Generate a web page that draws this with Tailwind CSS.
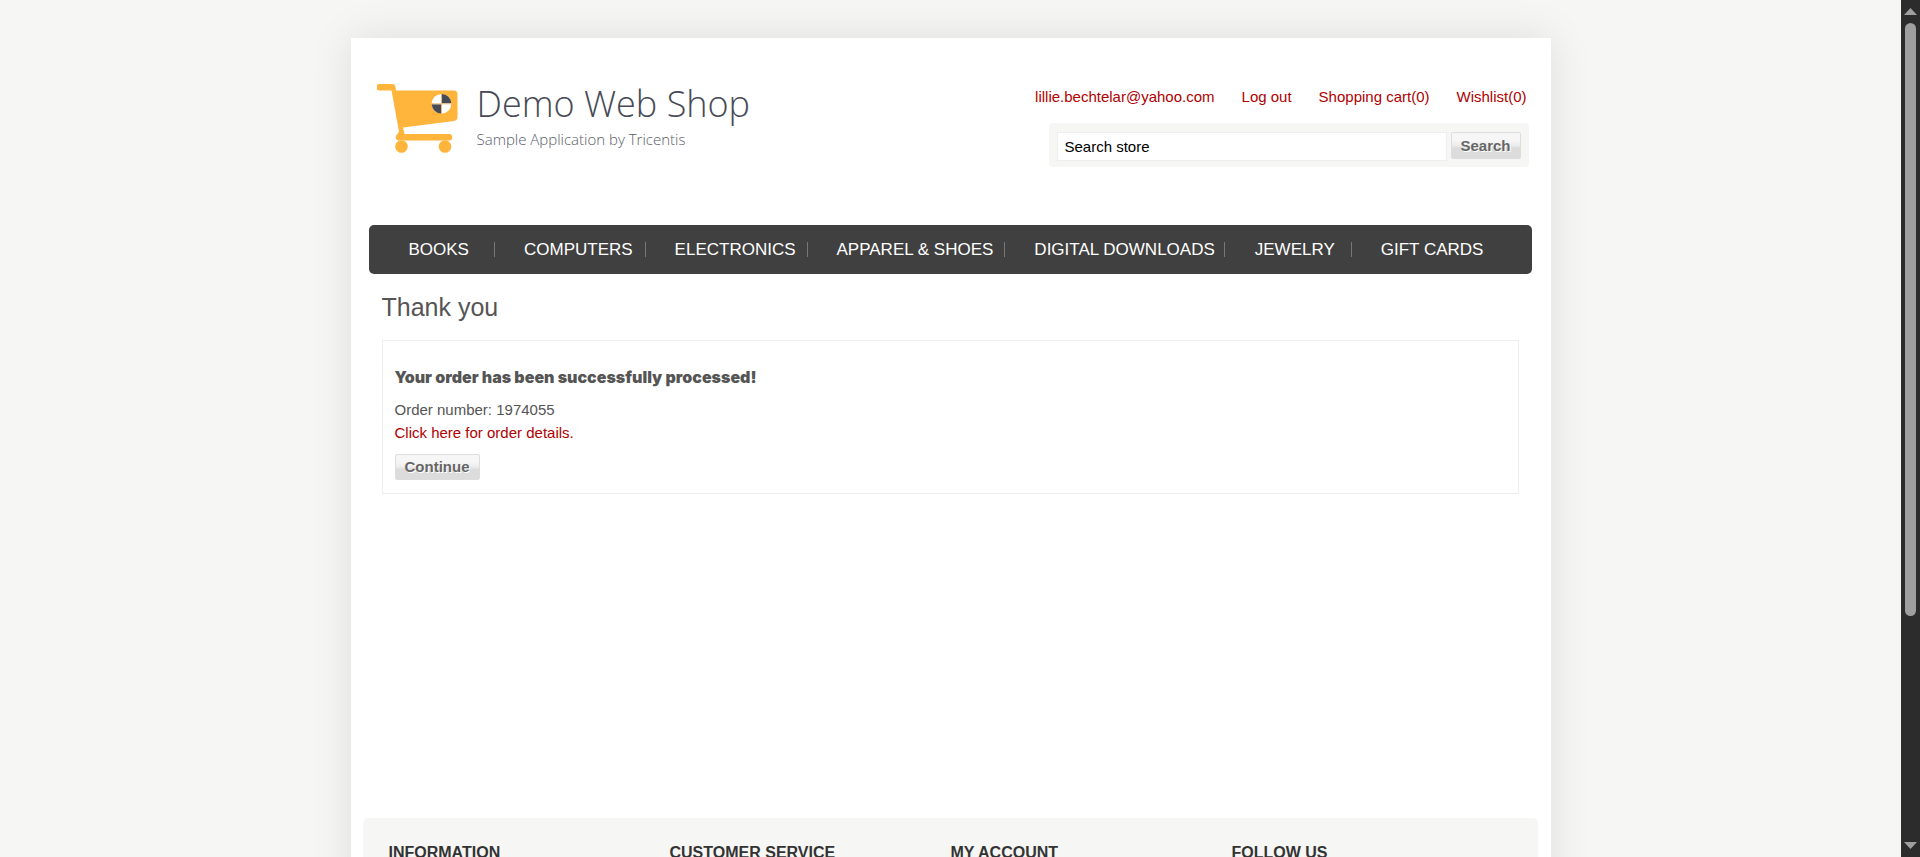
<!DOCTYPE html>
<html lang="en">
<head>
<meta charset="utf-8">
<meta name="viewport" content="width=device-width, initial-scale=1">
<title>Demo Web Shop. Checkout</title>
<script src="https://cdn.jsdelivr.net/npm/@tailwindcss/browser@4"></script>
</head>
<body class="flex h-screen overflow-hidden bg-[#f6f6f4] font-['Liberation_Sans',Arial,sans-serif] text-[15px] leading-[23px] text-[#555]">
  <div class="h-full min-w-0 flex-1 overflow-hidden pt-[38px]">
    <div class="mx-auto w-full max-w-[1200px] bg-white pt-11 pr-[13px] pl-3 shadow-[0_0_40px_rgba(0,0,0,0.1)]">

      <header class="flex h-[143px] items-start justify-between pr-[9px] pl-[14px]">
        <a href="#" class="flex items-start gap-[19px]" aria-label="Demo Web Shop home">
          <svg class="mt-px h-[72px] w-[81px]" viewBox="0 0 81 72" aria-hidden="true">
            <g fill="#ffb43b">
              <path d="M2.500 1H15q3 0 3.500 3L19 7.500H77q3.500 0 3.500 3.500V34q0 3.500-3.500 4L26 44.500 27.500 51H72a3 3 0 0 1 0 6.500H21a3.500 3.500 0 0 1-1-6l2-3L14.500 7.500H2.500a3.250 3.250 0 0 1 0-6.500Z"/>
              <circle cx="24.500" cy="63.500" r="6.300"/>
              <circle cx="68" cy="63.500" r="6.300"/>
            </g>
            <circle cx="64.500" cy="20.800" r="9.800" fill="#fff"/>
            <path fill="#474b57" d="M65 20.300V11a9.800 9.800 0 0 1 9.300 9.300ZM64 21.300V30.600a9.800 9.800 0 0 1-9.300-9.300Z"/>
            <path stroke="#e5b77a" stroke-width="1" d="M64.500 11V30.600M54.700 20.800H74.300"/>
          </svg>
          <span class="flex flex-col font-['Open_Sans',sans-serif] font-light">
            <span class="text-[36px] leading-[44px] text-[#474a56]">Demo Web Shop</span>
            <span class="text-[15px] leading-[26px] text-[#5a5d68]">Sample Application by Tricentis</span>
          </span>
        </a>

        <div class="flex flex-col items-end pt-[3px]">
          <nav aria-label="Account" class="flex gap-[27px] pr-[2px] text-[#b00000]">
            <a href="#">lillie.bechtelar@yahoo.com</a>
            <a href="#">Log out</a>
            <a href="#">Shopping cart(0)</a>
            <a href="#">Wishlist(0)</a>
          </nav>
          <form class="mt-[15px] flex w-[480px] items-start gap-1 rounded bg-[#f6f6f4] px-2 pt-[9px] pb-[6px]">
            <input type="text" value="Search store" aria-label="Search store" class="h-[29px] min-w-0 flex-1 border border-[#eee] bg-white px-[7px] text-[15px] text-black">
            <button type="button" class="h-[27px] w-[70px] rounded-xs border border-[#ddd] bg-linear-to-b from-[#f6f6f6] from-30% via-[#ececec] via-50% to-[#dcdcdc] to-60% text-[15px] leading-6 font-bold text-[#666] text-shadow-[1px_1px_0_#fff]">Search</button>
          </form>
        </div>
      </header>

      <nav aria-label="Categories" class="mx-[6px] rounded-[5px] bg-[#404040] pt-[17px] pb-[17px] pl-10 text-[17px] leading-[15px] text-white">
        <ul class="flex">
          <li class="border-r border-[#777] pr-[25px]"><a href="#">BOOKS</a></li>
          <li class="border-r border-[#777] pr-3 pl-[29px]"><a href="#">COMPUTERS</a></li>
          <li class="border-r border-[#777] pr-[11px] pl-[29px]"><a href="#">ELECTRONICS</a></li>
          <li class="border-r border-[#777] pr-[11px] pl-[29px]"><a href="#">APPAREL &amp; SHOES</a></li>
          <li class="border-r border-[#777] pr-[9px] pl-[29px]"><a href="#">DIGITAL DOWNLOADS</a></li>
          <li class="border-r border-[#777] pr-4 pl-[30px]"><a href="#">JEWELRY</a></li>
          <li class="pl-[29px]"><a href="#">GIFT CARDS</a></li>
        </ul>
      </nav>

      <main class="min-h-[544px] px-[19px] pt-[17px]">
        <h1 class="text-[25px] leading-8">Thank you</h1>
        <section class="mt-[17px] border border-[#eee] px-3 pt-6 pb-[13px]">
          <h2 class="font-['Inter',sans-serif] text-[16px] leading-6 font-black">Your order has been successfully processed!</h2>
          <p class="mt-[9px]">Order number: 1974055</p>
          <p><a href="#" class="text-[#b00000]">Click here for order details.</a></p>
          <button type="button" class="mt-[10px] block h-[26px] w-[85px] rounded-xs border border-[#ddd] bg-linear-to-b from-[#f6f6f6] from-30% via-[#ececec] via-50% to-[#dcdcdc] to-60% text-[15px] leading-6 font-bold text-[#666] text-shadow-[1px_1px_0_#fff]">Continue</button>
        </section>
      </main>

      <footer class="rounded-[5px] bg-[#f6f6f4] pt-[26px] pb-10 pl-[26px]">
        <div class="grid grid-cols-[repeat(3,281px)_1fr] text-[16px] leading-[18px] font-bold text-[#333]">
          <h3>INFORMATION</h3>
          <h3>CUSTOMER SERVICE</h3>
          <h3>MY ACCOUNT</h3>
          <h3>FOLLOW US</h3>
        </div>
      </footer>
    </div>
  </div>

  <div class="flex w-[19px] shrink-0 flex-col items-center bg-[#2c2c2c] pt-2 pb-2" aria-hidden="true">
    <svg class="h-[7px] w-[13px]" viewBox="0 0 13 7"><path fill="#9f9f9f" d="M6.500 0 13 7H0Z"/></svg>
    <div class="mt-2 h-[593px] w-[11px] rounded-full bg-[#9f9f9f]"></div>
    <svg class="mt-auto h-[7px] w-[13px]" viewBox="0 0 13 7"><path fill="#9f9f9f" d="M0 0H13L6.500 7Z"/></svg>
  </div>
</body>
</html>
